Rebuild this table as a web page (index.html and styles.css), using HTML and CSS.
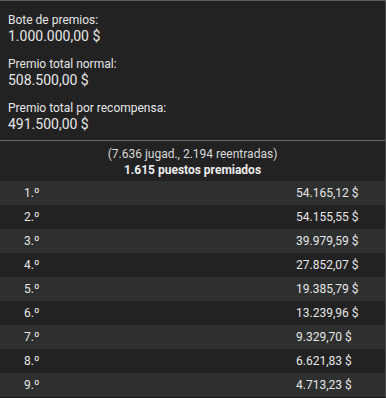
FILE: index.html
```html
<!DOCTYPE html>
<html lang="es">
<head>
<meta charset="utf-8">
<link rel="stylesheet" href="styles.css">
</head>
<body>
<div class="panel">
  <div class="summary">
    <div class="item">
      <div class="label">Bote de premios:</div>
      <div class="value">1.000.000,00 $</div>
    </div>
    <div class="item">
      <div class="label">Premio total normal:</div>
      <div class="value">508.500,00 $</div>
    </div>
    <div class="item">
      <div class="label">Premio total por recompensa:</div>
      <div class="value">491.500,00 $</div>
    </div>
  </div>
  <div class="header">
    <div class="players">(7.636 jugad., 2.194 reentradas)</div>
    <div class="paid">1.615 puestos premiados</div>
  </div>
  <div class="rows">
    <div class="row"><span class="rank">1.º</span><span class="prize">54.165,12 $</span></div>
    <div class="row"><span class="rank">2.º</span><span class="prize">54.155,55 $</span></div>
    <div class="row"><span class="rank">3.º</span><span class="prize">39.979,59 $</span></div>
    <div class="row"><span class="rank">4.º</span><span class="prize">27.852,07 $</span></div>
    <div class="row"><span class="rank">5.º</span><span class="prize">19.385,79 $</span></div>
    <div class="row"><span class="rank">6.º</span><span class="prize">13.239,96 $</span></div>
    <div class="row"><span class="rank">7.º</span><span class="prize">9.329,70 $</span></div>
    <div class="row"><span class="rank">8.º</span><span class="prize">6.621,83 $</span></div>
    <div class="row"><span class="rank">9.º</span><span class="prize">4.713,23 $</span></div>
  </div>
</div>
</body>
</html>
```

FILE: styles.css
```css
html, body {
  margin: 0;
  padding: 0;
  background: #212121;
}
.panel {
  width: 386px;
  height: 398px;
  box-sizing: border-box;
  border-top: 1px solid #5c5c5c;
  border-right: 1px solid #4a4a4a;
  border-bottom: 1px solid #1a1a1a;
  background: #222222;
  color: #e6e6e6;
  font-family: Roboto, "Liberation Sans", sans-serif;
  font-size: 12px;
  line-height: 14px;
  overflow: hidden;
}
.summary {
  padding: 12px 8px 7px 8px;
  display: flex;
  flex-direction: column;
  gap: 12px;
  border-bottom: 1px solid #666666;
}
.label {
  font-size: 12px;
  line-height: 15px;
}
.value {
  font-size: 14px;
  line-height: 17px;
}
.header {
  text-align: center;
  padding: 5px 0 3px 0;
  line-height: 16px;
}
.players {
  color: #d8d8d8;
}
.paid {
  font-weight: bold;
  color: #ededed;
}
.rows {
  display: flex;
  flex-direction: column;
}
.row {
  height: 24px;
  display: flex;
  align-items: center;
  background: #222222;
}
.row:nth-child(odd) {
  background: #2e3030;
}
.rank {
  padding-left: 24px;
  width: 272px;
}
.prize {
  flex: 1;
}
```
